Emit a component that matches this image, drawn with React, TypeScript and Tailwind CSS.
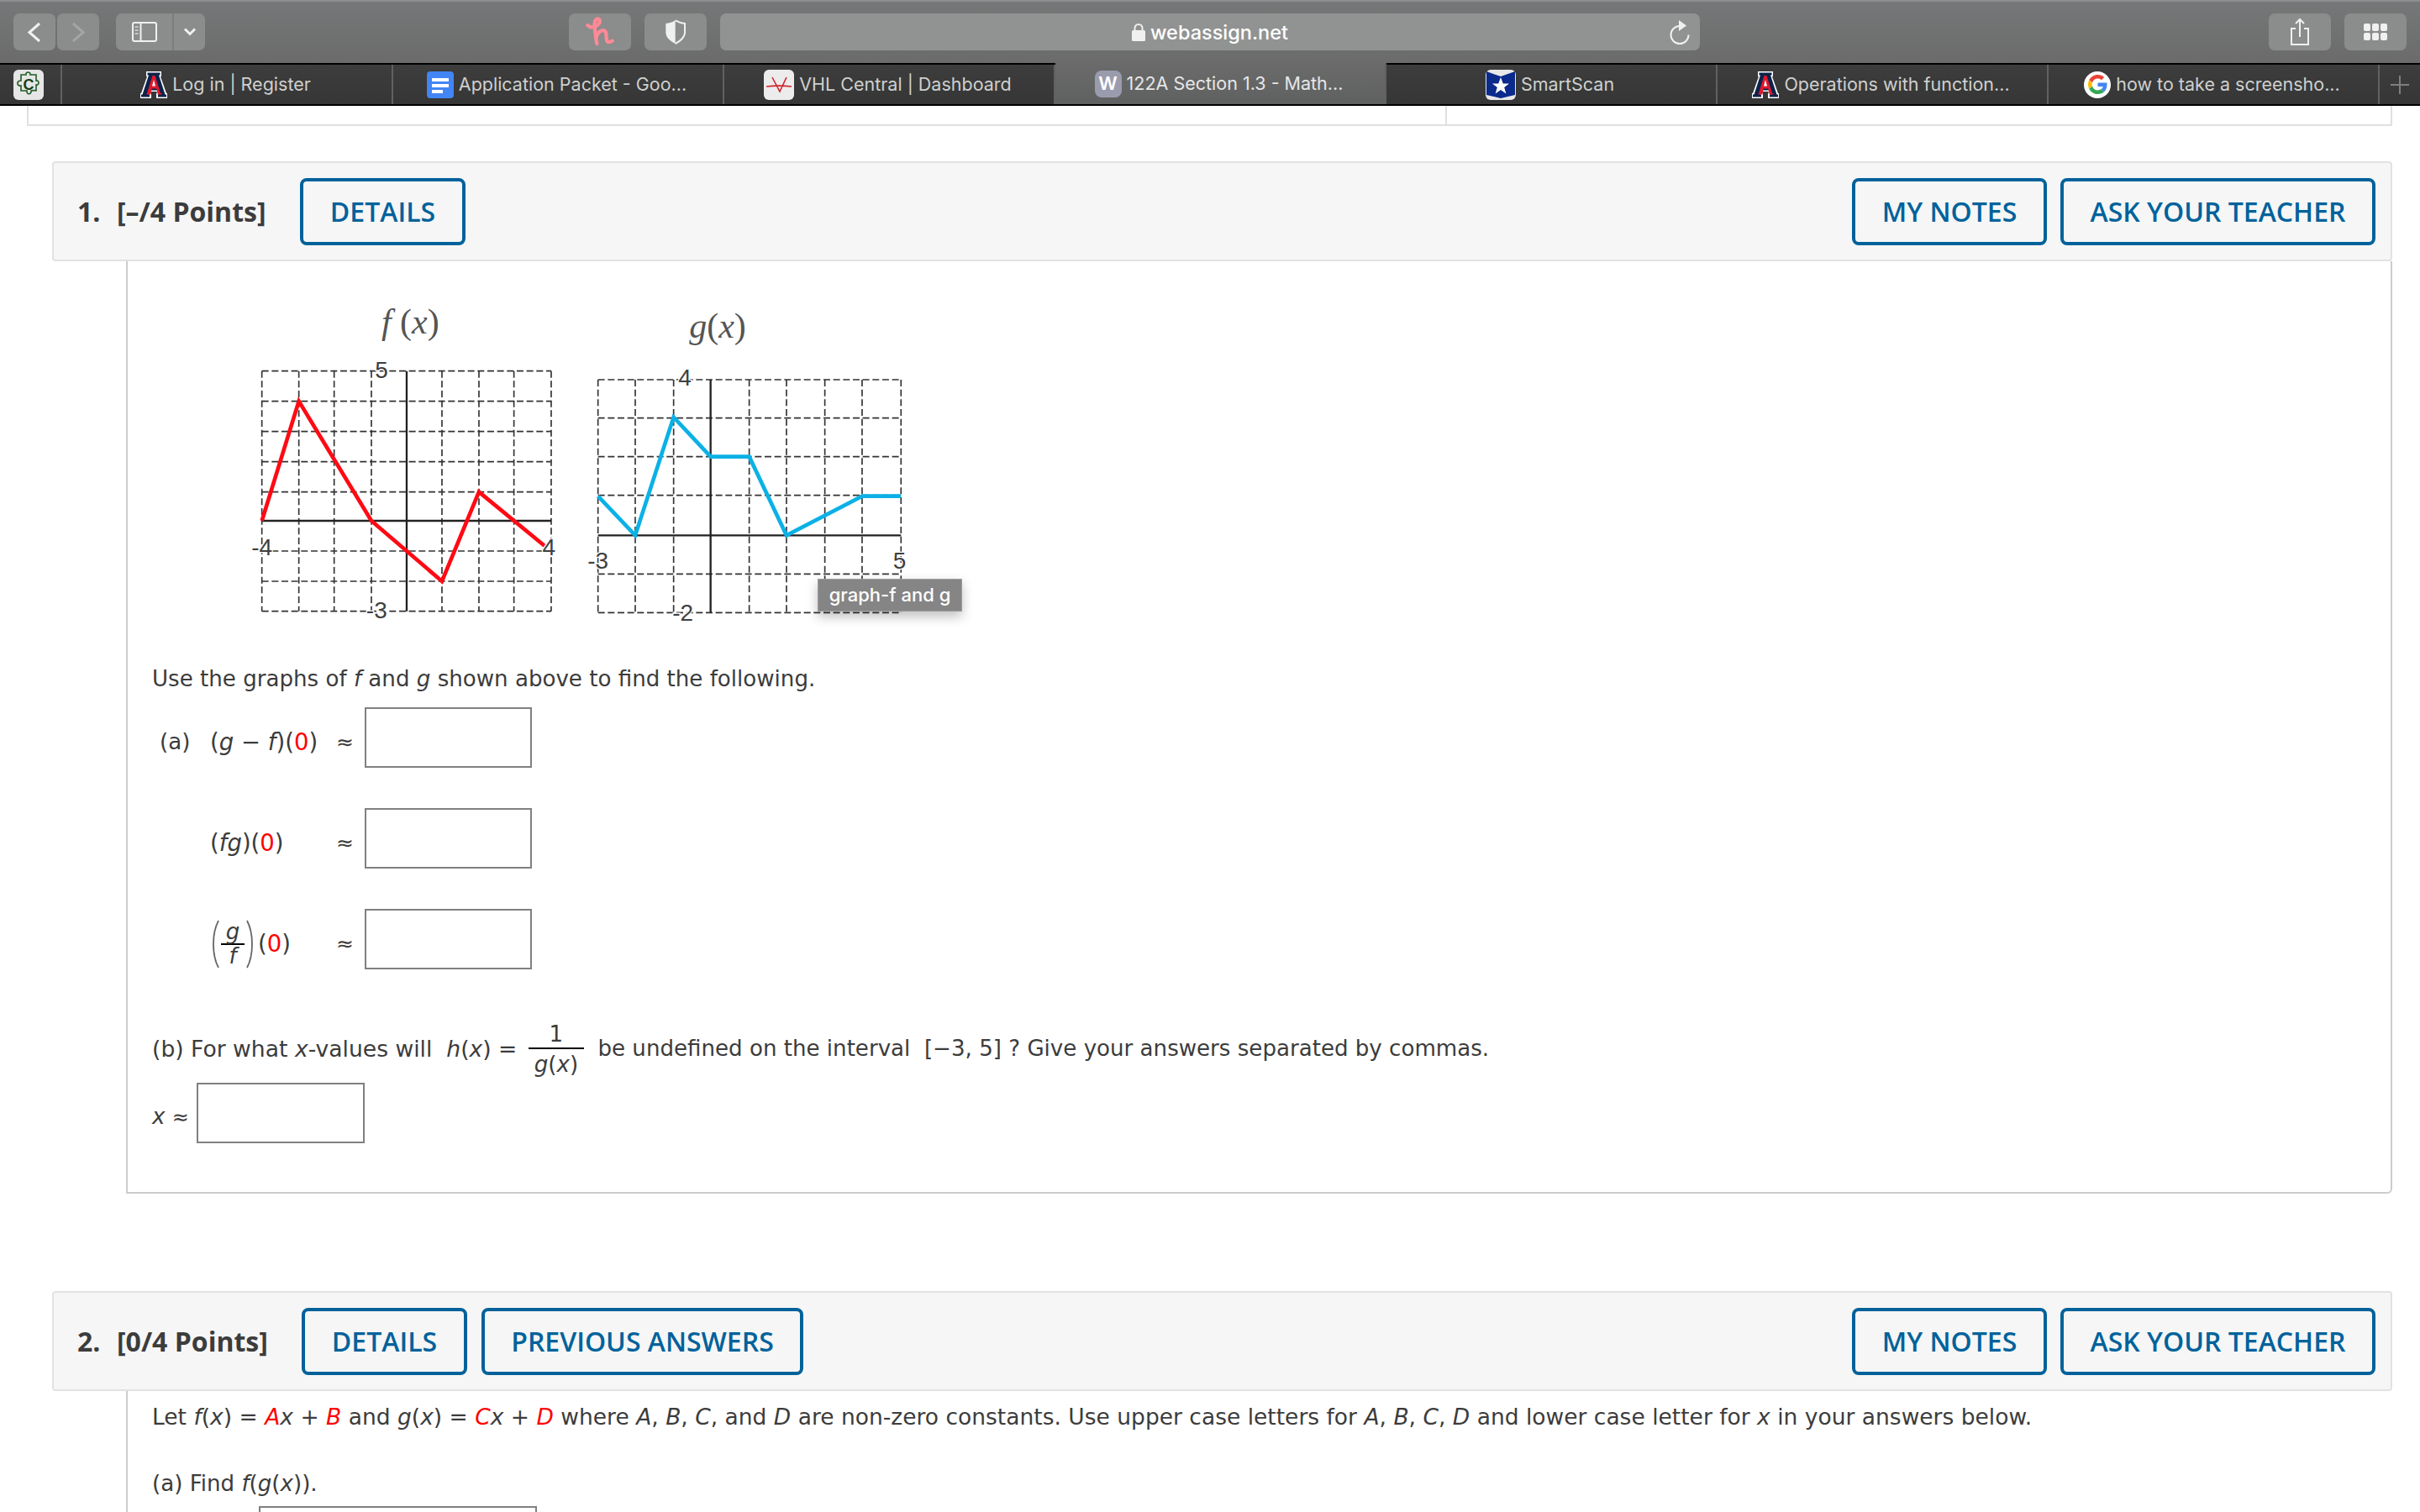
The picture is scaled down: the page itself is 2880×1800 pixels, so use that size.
import type { ReactNode } from "react";

const tabs: { title: string; icon: ReactNode; active?: boolean }[] = [
  { title: "Log in | Register", icon: <ArizonaIcon /> },
  { title: "Application Packet - Goo...", icon: <DocsIcon /> },
  { title: "VHL Central | Dashboard", icon: <VhlIcon /> },
  { title: "122A Section 1.3 - Math...", icon: <WebAssignIcon />, active: true },
  { title: "SmartScan", icon: <SmartScanIcon /> },
  { title: "Operations with function...", icon: <ArizonaIcon /> },
  { title: "how to take a screensho...", icon: <GoogleIcon /> },
];

function ArizonaIcon() {
  return (
    <svg width="32" height="32" viewBox="0 0 32 32" className="shrink-0">
      <path d="M7 0h18v6h-1l7 20h1v6H19v-6h1l-.6-2h-6.800l-.6 2h1v6H0v-6h1L8 6H7z" fill="#fff" />
      <path d="M8.500 1.500h15v3h-1.500l7.500 23h1.500v3h-10v-3h1l-1.500-5h-9l-1.500 5h1v3h-10v-3h1.500L10 4.500H8.500z" fill="#0c234b" />
      <path d="M14.500 5h3l6.500 21h1.500v1.500h-5V26l-1.300-5.500h-5.400L12.500 26v1.500h-5V26H8z" fill="#e0182d" />
      <path d="M16 10l-2 7.500h4z" fill="#fff" />
    </svg>
  );
}

function DocsIcon() {
  return (
    <svg width="32" height="32" viewBox="0 0 32 32" className="shrink-0">
      <rect x="0" y="0" width="32" height="32" rx="4" fill="#4285f4" />
      <rect x="6" y="8" width="20" height="4" fill="#fff" />
      <rect x="6" y="15" width="20" height="4" fill="#fff" />
      <rect x="6" y="22" width="13" height="4" fill="#fff" />
    </svg>
  );
}

function VhlIcon() {
  return (
    <svg width="36" height="36" viewBox="0 0 36 36" className="shrink-0">
      <rect width="36" height="36" rx="6" fill="#ececec" />
      <path d="M3 20c9-1 21-1 30 0M10 9l9 17 8-17" stroke="#d2232a" strokeWidth="1.600" fill="none" />
    </svg>
  );
}

function WebAssignIcon() {
  return (
    <span className="flex h-[32px] w-[32px] shrink-0 items-center justify-center rounded-[8px] bg-[#9a9cae] font-['Inter',sans-serif] text-[22px] font-semibold text-white">
      W
    </span>
  );
}

function SmartScanIcon() {
  return (
    <svg width="36" height="36" viewBox="0 0 36 36" className="shrink-0">
      <rect width="36" height="36" rx="6" fill="#e8e8e8" />
      <path d="M1 2l17 6 17-6v28l-17 4-17-4z" fill="#0a2a8c" />
      <path d="M18 9l2.800 7.500h7.200l-5.800 4.600 2.200 7.400-6.400-4.500-6.400 4.500 2.200-7.400-5.800-4.600h7.200z" fill="#fff" />
    </svg>
  );
}

function GoogleIcon() {
  return (
    <span className="flex h-[32px] w-[32px] shrink-0 items-center justify-center rounded-full bg-white">
      <svg width="23" height="23" viewBox="0 0 48 48">
        <path fill="#EA4335" d="M24 9.500c3.540 0 6.710 1.220 9.210 3.600l6.850-6.850C35.900 2.380 30.470 0 24 0 14.620 0 6.510 5.380 2.560 13.220l7.980 6.190C12.430 13.720 17.740 9.500 24 9.500z" />
        <path fill="#4285F4" d="M46.980 24.550c0-1.570-.15-3.090-.38-4.550H24v9.020h12.940c-.58 2.960-2.260 5.480-4.780 7.180l7.730 6c4.510-4.180 7.090-10.360 7.090-17.650z" />
        <path fill="#FBBC05" d="M10.530 28.590c-.48-1.450-.76-2.990-.76-4.590s.27-3.140.76-4.590l-7.980-6.190C.92 16.460 0 20.120 0 24c0 3.880.92 7.540 2.560 10.780l7.970-6.190z" />
        <path fill="#34A853" d="M24 48c6.480 0 11.930-2.130 15.890-5.810l-7.730-6c-2.150 1.450-4.920 2.300-8.160 2.300-6.260 0-11.570-4.220-13.470-9.910l-7.980 6.190C6.510 42.620 14.620 48 24 48z" />
      </svg>
    </span>
  );
}

function PuzzleIcon() {
  return (
    <svg width="36" height="36" viewBox="0 0 36 36">
      <rect width="36" height="36" rx="6" fill="#e6e6e6" />
      <path
        d="M9 6h6c-1-4 6-4 5 0h7v7c4-1 4 6 0 5v7c-1 0-2-1-6 0 1 5-6 5-5 0H9v-6c-5 1-6-6 0-6z"
        fill="none"
        stroke="#1e5c22"
        strokeWidth="1.600"
      />
      <text x="18" y="24" textAnchor="middle" fontFamily="Liberation Sans, sans-serif" fontWeight="700" fontSize="18" fill="#123f16">
        C
      </text>
    </svg>
  );
}

function ToolButton({ className, children }: { className: string; children?: ReactNode }) {
  return <div className={`flex h-[44px] shrink-0 items-center justify-center rounded-[7px] bg-[#8b8c8c] ${className}`}>{children}</div>;
}

function Toolbar() {
  return (
    <div className="flex h-[75px] items-start border-t-2 border-[#8e8e8e] bg-gradient-to-b from-[#767778] to-[#6a6b6a] pl-[16px] pt-[14px]">
      <ToolButton className="w-[50px]">
        <svg width="50" height="44" fill="none" stroke="#f0f0f0" strokeWidth="3">
          <path d="M31 12L19 22.500 31 33" />
        </svg>
      </ToolButton>
      <ToolButton className="ml-[2px] w-[50px]">
        <svg width="50" height="44" fill="none" stroke="#a4a5a5" strokeWidth="3">
          <path d="M19 12l12 10.500L19 33" />
        </svg>
      </ToolButton>
      <ToolButton className="ml-[20px] w-[106px]">
        <div className="flex h-full w-[69px] items-center justify-center border-r-2 border-[#7b7c7c]">
          <svg width="30" height="24" viewBox="0 0 30 24" fill="none" stroke="#f0f0f0" strokeWidth="2">
            <rect x="1" y="1" width="28" height="22" rx="2" />
            <path d="M10.500 1v22" />
            <path d="M3.500 6h4M3.500 10h4M3.500 14h4" strokeWidth="1.500" stroke="#d8d8d8" />
          </svg>
        </div>
        <div className="flex flex-1 items-center justify-center">
          <svg width="16" height="10" viewBox="0 0 16 10" fill="none" stroke="#f0f0f0" strokeWidth="3">
            <path d="M2 1.500l6 6 6-6" />
          </svg>
        </div>
      </ToolButton>
      <ToolButton className="ml-[433px] w-[74px]">
        <svg width="74" height="44" viewBox="0 0 222 132" fill="none" stroke="#ff8a96" strokeWidth="13" strokeLinecap="round">
          <path d="M67 42C80 58 115 40 110 25 106 14 92 18 92 38 92 60 96 85 100 108M98 85C105 60 130 52 133 72 135 90 130 112 155 98" />
        </svg>
      </ToolButton>
      <ToolButton className="ml-[16px] w-[74px]">
        <svg width="74" height="44" viewBox="0 0 222 132">
          <path d="M110 25C95 33 88 35 76 36V70C78 90 95 100 110 108Z" fill="#f0f0f0" />
          <path d="M110 25C125 33 132 35 144 36V70C142 90 125 100 110 108" fill="none" stroke="#f0f0f0" strokeWidth="6" />
        </svg>
      </ToolButton>
      <div className="ml-[16px] grid h-[44px] w-[1166px] shrink-0 grid-cols-[1fr_auto_1fr] items-center rounded-[7px] bg-[#919392]">
        <div />
        <div className="flex items-center gap-[6px] pt-[1px] font-['Inter',sans-serif] text-[23.5px] font-medium text-white">
          <svg width="16" height="21" viewBox="0 0 16 21">
            <rect x="0" y="8" width="16" height="13" rx="1.500" fill="#f0f0f0" />
            <path d="M3.500 9V5.500a4.500 4.500 0 0 1 9 0V9" fill="none" stroke="#f0f0f0" strokeWidth="2" />
          </svg>
          webassign.net
        </div>
        <div className="flex justify-end pr-[10px]">
          <svg width="28" height="30" viewBox="0 0 28 30" fill="none">
            <path d="M14 8a10.500 10.500 0 1 0 10.500 10.500" stroke="#f0f0f0" strokeWidth="2" />
            <path d="M13 1l9 6.500-9 6.500z" fill="#f0f0f0" />
          </svg>
        </div>
      </div>
      <ToolButton className="ml-[677px] w-[74px]">
        <svg width="26" height="34" viewBox="0 0 26 34" fill="none" stroke="#f0f0f0" strokeWidth="2">
          <path d="M8 13H3v19h20V13h-5" />
          <path d="M13 23V2M8 7l5-5 5 5" />
        </svg>
      </ToolButton>
      <ToolButton className="ml-[16px] w-[74px]">
        <div className="grid grid-cols-3 gap-[2px]">
          {[0, 1, 2, 3, 4, 5].map((n) => (
            <span key={n} className="h-[9px] w-[8px] rounded-[2px] bg-[#f0f0f0]" />
          ))}
        </div>
      </ToolButton>
    </div>
  );
}

function TabBar() {
  return (
    <div className="flex h-[51px] border-y-2 border-black bg-gradient-to-b from-[#3c3d3c] to-[#353635] font-['Inter',sans-serif] text-[21.5px] text-[#cfcfcf]">
      <div className="flex w-[74px] shrink-0 items-center justify-center border-r-2 border-[#606160] pr-[4px]">
        <PuzzleIcon />
      </div>
      {tabs.map((tab) => (
        <div
          key={tab.title}
          className={`flex w-[394px] shrink-0 items-center justify-center gap-[6px] border-r-2 border-[#606160] pr-[3px] ${
            tab.active ? "-mt-[2px] bg-gradient-to-b from-[#6a6b6a] to-[#5f6160] text-[#e6e6e6]" : ""
          }`}
        >
          {tab.icon}
          <span className="whitespace-nowrap">{tab.title}</span>
        </div>
      ))}
      <div className="flex flex-1 items-center justify-center">
        <svg width="22" height="22" fill="none" stroke="#7d7e7d" strokeWidth="2">
          <path d="M11 0v22M0 11h22" />
        </svg>
      </div>
    </div>
  );
}

function ActionButton({ children, className = "" }: { children: ReactNode; className?: string }) {
  return (
    <button
      type="button"
      className={`flex h-[80px] items-center justify-center rounded-[8px] border-[4px] border-[#00629b] font-['Open_Sans',sans-serif] text-[32px] font-semibold text-[#00629b] ${className}`}
    >
      {children}
    </button>
  );
}

function QuestionHeader({ title, number, titleWidth, extra }: { title: string; number: string; titleWidth: string; extra?: ReactNode }) {
  return (
    <div className="flex h-[119px] items-center rounded-[4px] border-2 border-[#e2e2e2] bg-[#f6f6f6] pl-[28px] pr-[18px]">
      <div className={`flex font-['Open_Sans',sans-serif] text-[32px] font-bold text-[#3c3c3c] ${titleWidth}`}>
        <span className="w-[47px]">{number}</span>
        <span>{title}</span>
      </div>
      <ActionButton className="w-[197px]">DETAILS</ActionButton>
      {extra}
      <ActionButton className="ml-auto w-[232px]">MY NOTES</ActionButton>
      <ActionButton className="ml-[16px] w-[375px]">ASK YOUR TEACHER</ActionButton>
    </div>
  );
}

function AnswerBox({ className }: { className: string }) {
  return <div className={`h-[72px] border-2 border-[#808080] bg-white ${className}`} />;
}

function V({ children }: { children: ReactNode }) {
  return <i>{children}</i>;
}

function Red({ children }: { children: ReactNode }) {
  return <span className="text-[#ff0000]">{children}</span>;
}

function Graphs() {
  const label = "fill-[#3f3f3f] font-['Liberation_Sans',sans-serif] text-[84px] [paint-order:stroke] stroke-white stroke-[8px]";
  const fx = [155, 287, 413, 546, 798, 930, 1055, 1188];
  const fy = [305, 413, 521, 629, 737, 948, 1056, 1163];
  const gx = [95, 228, 365, 635, 768, 905, 1038, 1177];
  const gy = [336, 473, 611, 749, 1030, 1168];
  return (
    <svg width="880" height="410" viewBox="0 0 880 410" className="block">
      <g transform="translate(-20 -10) scale(0.3333)">
        <g stroke="#333" strokeWidth="5" strokeDasharray="24 11">
          {fx.map((x) => (
            <line key={x} x1={x} y1="305" x2={x} y2="1163" />
          ))}
          {fy.map((y) => (
            <line key={y} x1="155" y1={y} x2="1188" y2={y} />
          ))}
        </g>
        <path d="M672 305V1163M155 840H1188" stroke="#222" strokeWidth="7" />
        <polyline points="155,840 287,413 546,840 798,1056 930,737 1165,930" fill="none" stroke="#ff0a14" strokeWidth="14" />
        <text x="582" y="330" textAnchor="middle" className={label}>5</text>
        <text x="155" y="962" textAnchor="middle" className={label}>-4</text>
        <text x="1180" y="962" textAnchor="middle" className={label}>4</text>
        <text x="565" y="1188" textAnchor="middle" className={label}>-3</text>
        <text x="685" y="172" textAnchor="middle" fontSize="126" fill="#555" fontFamily="Liberation Serif, serif">
          <tspan fontStyle="italic">f </tspan>(<tspan fontStyle="italic">x</tspan>)
        </text>
      </g>
      <g transform="translate(400 -10) scale(0.3333)">
        <g stroke="#333" strokeWidth="5" strokeDasharray="24 11">
          {gx.map((x) => (
            <line key={x} x1={x} y1="336" x2={x} y2="1168" />
          ))}
          {gy.map((y) => (
            <line key={y} x1="95" y1={y} x2="1177" y2={y} />
          ))}
        </g>
        <path d="M497 336V1168M95 892H1177" stroke="#222" strokeWidth="7" />
        <polyline points="95,752 228,892 365,470 497,611 635,611 768,892 1038,752 1177,752" fill="none" stroke="#0bb1e6" strokeWidth="14" />
        <text x="405" y="358" textAnchor="middle" className={label}>4</text>
        <text x="95" y="1010" textAnchor="middle" className={label}>-3</text>
        <text x="1172" y="1010" textAnchor="middle" className={label}>5</text>
        <text x="398" y="1196" textAnchor="middle" className={label}>-2</text>
        <text x="522" y="186" textAnchor="middle" fontSize="126" fill="#555" fontFamily="Liberation Serif, serif">
          <tspan fontStyle="italic">g</tspan>(<tspan fontStyle="italic">x</tspan>)
        </text>
      </g>
    </svg>
  );
}

function Fraction({ top, bottom }: { top: ReactNode; bottom: ReactNode }) {
  return (
    <span className="ml-[5px] inline-flex w-[66px] flex-col items-center">
      <span className="w-full border-b-2 border-black pb-[1px] text-center leading-[30px]">{top}</span>
      <span className="pt-[2px] leading-[32px]">{bottom}</span>
    </span>
  );
}

function BigParen({ flip }: { flip?: boolean }) {
  return (
    <svg width="12" height="58" viewBox="0 0 12 58" fill="none" stroke="#666" strokeWidth="1.800" className={flip ? "-scale-x-100" : ""}>
      <path d="M10 1C2 16 2 42 10 57" />
    </svg>
  );
}

function AnswerRow({ label, expr }: { label?: string; expr: ReactNode }) {
  return (
    <div className="grid h-[72px] grid-cols-[60px_150px_34px_199px] items-center">
      <span className="pt-[11px]">{label}</span>
      <span className="pt-[11px] text-[27.5px]">{expr}</span>
      <span className="pt-[11px] text-[25px] font-medium">≈</span>
      <AnswerBox className="w-[199px]" />
    </div>
  );
}

export default function App() {
  return (
    <div className="h-[1800px] w-[2880px] overflow-hidden bg-white font-['DejaVu_Sans',sans-serif] text-[26.1px] text-[#3c3c3c]">
      <Toolbar />
      <TabBar />
      <div className="ml-[32px] flex h-[24px] w-[2815px] border-x-2 border-b-2 border-[#e0e0e0]">
        <div className="w-[1688px] border-r-2 border-[#e0e0e0]" />
      </div>

      <div className="ml-[62px] mt-[42px] w-[2785px]">
        <QuestionHeader number="1." title="[–/4 Points]" titleWidth="w-[265px]" />
        <div className="ml-[88px] h-[1110px] rounded-br-[6px] border-x-2 border-b-2 border-[#cccccc] pt-[39px]">
          <div className="relative ml-[128px] w-[880px]">
            <Graphs />
            <div className="absolute left-[693px] top-[339px] flex h-[39px] w-[172px] items-center justify-center border border-[#9c9c9c] bg-[#858585] font-['Inter',sans-serif] text-[22px] font-medium text-white shadow-[0_6px_14px_rgba(0,0,0,0.25)]">
              graph-f and g
            </div>
          </div>

          <p className="ml-[29px] mt-[31px] flex h-[36px] items-center whitespace-pre">
            Use the graphs of <V>f</V> and <V>g</V> shown above to find the following.
          </p>

          <div className="ml-[38px] mt-[15px] flex flex-col gap-[48px]">
            <AnswerRow label="(a)" expr={<>(<V>g</V> − <V>f</V>)(<Red>0</Red>)</>} />
            <AnswerRow expr={<>(<V>fg</V>)(<Red>0</Red>)</>} />
            <AnswerRow
              expr={
                <span className="flex items-center">
                  <BigParen />
                  <span className="mx-[1px] inline-flex flex-col items-center text-[26px] leading-[27px]">
                    <span className="w-[28px] border-b-2 border-black text-center"><V>g</V></span>
                    <V>f</V>
                  </span>
                  <BigParen flip />
                  <span className="ml-[3px]">(<Red>0</Red>)</span>
                </span>
              }
            />
          </div>

          <div className="ml-[29px] mt-[60px] flex h-[70px] items-center whitespace-pre">
            <span className="text-[26.6px]">(b) For what <V>x</V>-values will  <V>h</V>(<V>x</V>) = </span>
            <Fraction top="1" bottom={<><V>g</V>(<V>x</V>)</>} />
            <span>  be undefined on the interval  [−3, 5] ? Give your answers separated by commas.</span>
          </div>

          <div className="ml-[29px] mt-[5px] flex items-center">
            <span className="w-[53px] pt-[10px]"><V>x</V> <span className="text-[24px] font-medium">≈</span></span>
            <AnswerBox className="w-[200px]" />
          </div>
        </div>

        <div className="mt-[116px]">
          <QuestionHeader
            number="2."
            title="[0/4 Points]"
            titleWidth="w-[267px]"
            extra={<ActionButton className="ml-[17px] w-[383px]">PREVIOUS ANSWERS</ActionButton>}
          />
        </div>
        <div className="ml-[88px] h-[200px] border-l-2 border-[#cccccc] pl-[29px]">
          <p className="flex h-[62px] items-center whitespace-pre text-[26.5px]">
            Let <V>f</V>(<V>x</V>) = <V><Red>A</Red></V><V>x</V> + <V><Red>B</Red></V> and <V>g</V>(<V>x</V>) = <V><Red>C</Red></V><V>x</V> + <V><Red>D</Red></V> where <V>A</V>, <V>B</V>, <V>C</V>, and <V>D</V> are non-zero constants. Use upper case letters for <V>A</V>, <V>B</V>, <V>C</V>, <V>D</V> and lower case letter for <V>x</V> in your answers below.
          </p>
          <p className="mt-[18px] flex h-[62px] items-center whitespace-pre">
            (a) Find <V>f</V>(<V>g</V>(<V>x</V>)).
          </p>
          <div className="ml-[127px] -mt-[5px] h-[40px] w-[331px] border-2 border-[#808080]" />
        </div>
      </div>
    </div>
  );
}
